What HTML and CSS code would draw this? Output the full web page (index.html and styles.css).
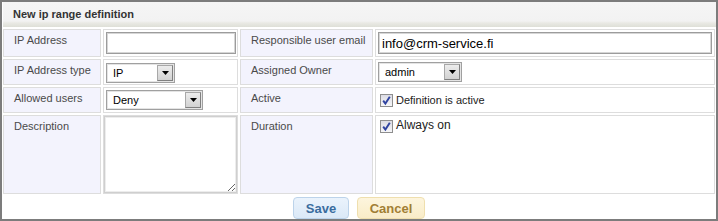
FILE: index.html
```html
<!DOCTYPE html>
<html>
<head>
<meta charset="utf-8">
<link rel="stylesheet" href="styles.css">
</head>
<body>
<div class="panel">
  <div class="panel-head">New ip range definition</div>
  <table class="form">
    <colgroup>
      <col class="c1"><col class="c2"><col class="c3"><col class="c4">
    </colgroup>
    <tr class="r1">
      <th>IP Address</th>
      <td><input class="text short" type="text" value=""></td>
      <th>Responsible user email</th>
      <td><input class="text email" type="text" value="info@crm-service.fi"></td>
    </tr>
    <tr class="r2">
      <th>IP Address type</th>
      <td><span class="select s-ip"><span class="val">IP</span><span class="arrow"><svg width="7" height="4" viewBox="0 0 7 4"><path d="M0 0H7L3.5 4Z" fill="#000"/></svg></span></span></td>
      <th>Assigned Owner</th>
      <td><span class="select s-owner"><span class="val">admin</span><span class="arrow"><svg width="7" height="4" viewBox="0 0 7 4"><path d="M0 0H7L3.5 4Z" fill="#000"/></svg></span></span></td>
    </tr>
    <tr class="r3">
      <th>Allowed users</th>
      <td><span class="select s-deny"><span class="val">Deny</span><span class="arrow"><svg width="7" height="4" viewBox="0 0 7 4"><path d="M0 0H7L3.5 4Z" fill="#000"/></svg></span></span></td>
      <th>Active</th>
      <td><label class="check small"><span class="box"><svg width="11" height="11" viewBox="0 0 11 11"><path d="M2.2 5.6L4.4 8.6L8.8 1.8" fill="none" stroke="#2f43a0" stroke-width="1.9"/></svg></span>Definition is active</label></td>
    </tr>
    <tr class="r4">
      <th>Description</th>
      <td class="ta"><textarea class="desc"></textarea></td>
      <th>Duration</th>
      <td><label class="check top"><span class="box"><svg width="11" height="11" viewBox="0 0 11 11"><path d="M2.2 5.6L4.4 8.6L8.8 1.8" fill="none" stroke="#2f43a0" stroke-width="1.9"/></svg></span>Always on</label></td>
    </tr>
  </table>
  <div class="actions">
    <button class="btn save" type="button">Save</button>
    <button class="btn cancel" type="button">Cancel</button>
  </div>
</div>
</body>
</html>
```

FILE: styles.css
```css
html, body {
  margin: 0;
  padding: 0;
  background: #fff;
}
body {
  font-family: "Liberation Sans", Arial, sans-serif;
  font-size: 11px;
  color: #333;
}
.panel {
  width: 718px;
  height: 221px;
  box-sizing: border-box;
  border: 2px solid #7c7c7c;
  background: #fff;
  overflow: hidden;
}
.panel-head {
  margin: 0 0 0 1px;
  height: 25px;
  box-sizing: border-box;
  padding: 6px 0 0 10px;
  font-weight: bold;
  font-size: 11px;
  color: #333;
  background: linear-gradient(#f5f5f5 0, #f2f2f2 76%, #e9e9e4 84%, #dedfd7 100%);
}
.form {
  width: 714px;
  table-layout: fixed;
  border-collapse: separate;
  border-spacing: 2px;
  margin-top: 0;
  margin-left: -1px;
}
.c1 { width: 98px; }
.c2 { width: 135px; }
.c3 { width: 133px; }
.c4 { width: 340px; }
.form th,
.form td {
  border: 1px solid #dddddd;
  vertical-align: top;
  box-sizing: border-box;
}
.form th {
  background: #f3f3fd;
  font-weight: normal;
  text-align: left;
  color: #4a4a4a;
  padding: 4px 6px 0 10px;
  font-size: 11px;
  white-space: nowrap;
}
.form td {
  padding: 2px 2px 0 2px;
}
.r1 { height: 28px; }
.r2 { height: 26px; }
.r3 { height: 26px; }
.r4 { height: 79px; }

.text {
  box-sizing: border-box;
  height: 22px;
  margin: 0;
  border: 1px solid #9c9c9c;
  box-shadow: inset 0 0 0 1px #d6d6d6;
  font-family: "Liberation Sans", Arial, sans-serif;
  color: #000;
  padding: 1px 3px;
  outline: none;
}
.text.short { width: 130px; }
.text.email { width: 334px; font-size: 13px; }

.select {
  display: inline-flex;
  box-sizing: border-box;
  height: 20px;
  border: 1px solid #a0a0a0;
  box-shadow: inset 0 0 0 1px #e4e4e4;
  background: #fff;
  color: #000;
  font-size: 11px;
  vertical-align: top;
}
.select .val {
  flex: 1;
  padding: 3px 0 0 6px;
}
.select .arrow {
  width: 16px;
  margin: 1px 1px 1px 0;
  box-sizing: border-box;
  border: 1px solid #a8a8a8;
  border-right-color: #808080;
  border-bottom-color: #808080;
  background: linear-gradient(#ececec, #d2d2d2);
  display: flex;
  align-items: center;
  justify-content: center;
}
.s-ip { width: 69px; margin-top: 1px; }
.s-deny { width: 97px; }
.s-owner { width: 84px; }

.check {
  display: inline-flex;
  align-items: flex-start;
  color: #222;
  margin-left: 2px;
}
.check .box {
  width: 13px;
  height: 13px;
  box-sizing: border-box;
  border: 1px solid #8e8e8e;
  background: linear-gradient(#dcdce4, #f6f6f8);
  margin-right: 3px;
  display: flex;
  align-items: center;
  justify-content: center;
}
.check.small {
  font-size: 11px;
  margin-top: 4px;
  line-height: 13px;
}
.check.small .box { margin-top: 0; }
.check.top {
  font-size: 12px;
  margin-top: 1px;
  line-height: 12px;
}
.check.top .box { margin-top: 1px; }

.form td.ta { padding: 0; }
.desc {
  display: block;
  box-sizing: border-box;
  width: 133px;
  height: 77px;
  margin: 0;
  border: 1px solid #cfcfcf;
  box-shadow: inset 0 0 0 1px #ededed;
  resize: both;
  outline: none;
}

.actions {
  display: flex;
  justify-content: center;
  gap: 8px;
  margin-top: 1px;
}
.btn {
  height: 22px;
  box-sizing: border-box;
  border-radius: 4px;
  font-family: "Liberation Sans", Arial, sans-serif;
  font-weight: bold;
  font-size: 13px;
  padding: 0;
  cursor: pointer;
}
.btn.save {
  width: 56px;
  color: #3a6c9e;
  border: 1px solid #bcd3ea;
  background: linear-gradient(#eaf3fc, #dbe9f7);
}
.btn.cancel {
  width: 68px;
  color: #a17e34;
  border: 1px solid #efdfae;
  background: linear-gradient(#fdf5dd, #f9ecc8);
}
```
